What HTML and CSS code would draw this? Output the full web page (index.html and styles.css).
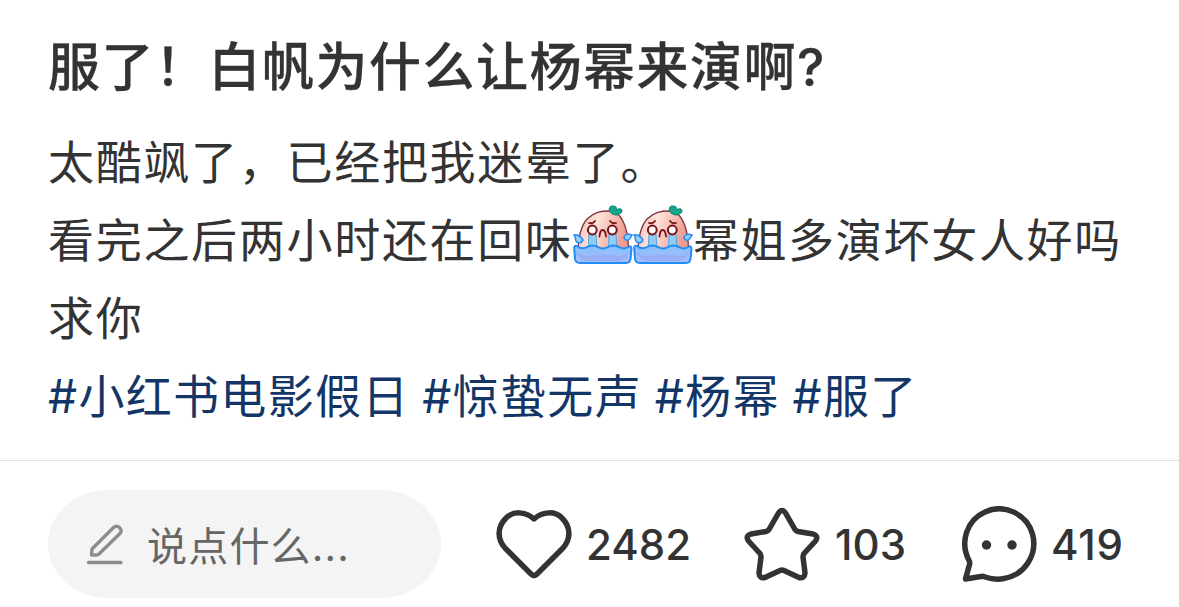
FILE: index.html
```html
<!DOCTYPE html>
<html lang="zh-CN">
<head>
  <meta charset="UTF-8">
  <meta name="viewport" content="width=device-width, initial-scale=1.0">
  <title>服了！白帆为什么让杨幂来演啊?</title>
  <link rel="stylesheet" href="styles.css">
</head>
<body>
  <!-- crying sticker, used twice in the text -->
  <svg class="defs" width="0" height="0">
    <defs>
      <linearGradient id="skin" x1="0" y1="0" x2="1" y2="0.3">
        <stop offset="0" stop-color="#f3b9aa"/>
        <stop offset="0.4" stop-color="#fde3da"/>
        <stop offset="1" stop-color="#ee9c90"/>
      </linearGradient>
      <linearGradient id="water" x1="0" y1="0" x2="0" y2="1">
        <stop offset="0" stop-color="#86c0ff"/>
        <stop offset="1" stop-color="#a9bdfb"/>
      </linearGradient>
    </defs>
    <symbol id="cry" viewBox="0 0 60 60">
      <path d="M5 50C5 36 7 23 14 15C21 8 28 7 36 7C45 7 49 14 52 22C55 31 56 40 55 50Z" fill="url(#skin)" stroke="#84353c" stroke-width="1.3"/>
      <path d="M43 11C34 10 35 1 40 2C43 2 44 4 44 6C47 3 51 6 48 9C47 10 45 10 44 11Z" fill="#11a68b" stroke="#078574" stroke-width="1"/>
      <path d="M16 30H23L24 46H15ZM36 30H43L44 46H35.500Z" fill="#93cdf0" stroke="#4da4e8" stroke-width="1"/>
      <circle cx="19.300" cy="26" r="4.400" fill="#fff" stroke="#7b1015" stroke-width="2"/>
      <circle cx="39.300" cy="26" r="4.400" fill="#fff" stroke="#7b1015" stroke-width="2"/>
      <path d="M16 19Q20 20 22 17M37 17Q39 20 43 19M26.500 32.500Q27 26 29.700 26Q32.400 26 33 32.500" fill="none" stroke="#7b1015" stroke-width="1.800" stroke-linecap="round"/>
      <path d="M1 31C4 30 9 33 10 36C9 39.500 4 39.500 3 37C2 35 3 33 1 31ZM59 31C55 29 51 31 51 34C53 38 57 36 59 31Z" fill="#9bcbfb" stroke="#218cf8" stroke-width="1.500"/>
      <path d="M1.200 44Q1 41 4 42Q9 46 14 43Q19 40 25 43Q30 46 35 43Q40 40 46 43Q51 46 55 43Q58.500 41 58.500 45L57.500 55Q57 59 53 59H7Q2.500 59 2 55Z" fill="url(#water)" stroke="#218cf8" stroke-width="2"/>
      <path d="M4 47Q6 57 14 57H45Q53 57 56 47Q52 52 46 52Q30 49 15 52Q8 52 4 47Z" fill="#8fa0ed" opacity=".5"/>
    </symbol>
  </svg>

  <main class="note">
    <h1>服了！白帆为什么让杨幂来演啊?</h1>
    <p>太酷飒了，已经把我迷晕了。</p>
    <p>看完之后两小时还在回味<svg class="emoji"><use href="#cry"/></svg><svg class="emoji"><use href="#cry"/></svg>幂姐多演坏女人好吗求你</p>
    <p class="tags"><a>#小红书电影假日</a> <a>#惊蛰无声</a> <a>#杨幂</a> <a>#服了</a></p>
  </main>

  <footer class="bar">
    <div class="comment-input">
      <svg class="pen" viewBox="0 0 38 42" fill="none" stroke="#8c8c8c" stroke-width="3.300" stroke-linecap="round" stroke-linejoin="round">
        <path d="M5.500 32L6 26L27.500 4.500Q30.500 2 33.500 4.500Q36.500 7.500 34 10.500L13 31Q12 32 10.500 32Z"/>
        <path d="M2.500 39.500H35"/>
      </svg>
      <span>说点什么...</span>
    </div>
    <div class="action like">
      <svg viewBox="0 0 76 76" fill="none" stroke="#333" stroke-width="5.500" stroke-linejoin="round">
        <path d="M38 13C29 5 17 5 10 12C1 21 1 33 9 42L35 68Q38 71 41 68L67 42C75 33 75 21 66 12C59 5 47 5 38 13Z"/>
      </svg>
      <span>2482</span>
    </div>
    <div class="action star">
      <svg viewBox="0 0 76 76" fill="none" stroke="#333" stroke-width="5.500" stroke-linejoin="round">
        <path d="M34.500 7Q38 2 41.500 7L51 23.500Q52 25 54 25.500L69 28Q75 30 71.500 35L60 47.500Q59 49 59 51L61 67Q60.500 73 55 71.500L40 64.500Q38 63.500 36 64.500L21 71.500Q15.500 73 15 67L17 51Q17 49 16 47.500L4.500 35Q1 30 7 28L22 25.500Q24 25 25 23.500Z"/>
      </svg>
      <span>103</span>
    </div>
    <div class="action chat">
      <svg viewBox="0 0 76 76" fill="none" stroke="#333" stroke-width="5.500" stroke-linejoin="round">
        <path d="M4.500 73L8.500 58.500Q9 57 8.500 55.500C-2 36 6 14 24 6C43-3 66 8 71.500 28C77 48 64 69 43 72.500C36 74 30 73 24 71Q22 70 20 70.500Z"/>
        <circle cx="25.500" cy="39" r="4.700" fill="#333" stroke="none"/>
        <circle cx="51" cy="39" r="4.700" fill="#333" stroke="none"/>
      </svg>
      <span>419</span>
    </div>
  </footer>
</body>
</html>
```

FILE: styles.css
```css
* {
  margin: 0; padding: 0; box-sizing: border-box;
}
body {
  background: #fff;
  color: #333;
  font-family: Inter, 'Noto Sans CJK SC', sans-serif;
}
.defs {
  position: absolute;
}
.note {
  height: 461px;
  padding: 29px 48px 0;
  border-bottom: 1px solid #e2e2e2;
}
.note h1 {
  font-size: 52px;
  font-weight: 500;
  line-height: 78px;
  letter-spacing: 1.5px;
  margin-bottom: 16px;
  -webkit-text-stroke: 0.3px #333;
}
.note p {
  font-size: 46px;
  line-height: 78px;
  letter-spacing: 1.7px;
}
.note .tags {
  color: #133667;
  letter-spacing: 1.3px;
  word-spacing: -1.5px;
}
.emoji {
  width: 60px;
  height: 60px;
  vertical-align: -7px;
}
.bar {
  display: flex;
  align-items: center;
  padding: 29px 48px 9px;
}
.comment-input {
  display: flex;
  align-items: center;
  width: 393px;
  height: 108px;
  padding-left: 38px;
  background: #f4f4f4;
  border-radius: 60px / 54px;
  color: #666;
  font-size: 40px;
  letter-spacing: 1.2px;
}
.pen {
  width: 38px;
  height: 42px;
  margin-right: 23px;
}
.action {
  display: flex;
  align-items: center;
  font-size: 42px;
  font-weight: 450;
}
.action svg {
  width: 76px;
  height: 76px;
  margin-right: 14px;
}
.like {
  margin-left: 55px;
}
.star {
  margin-left: 53px;
}
.star svg {
  margin-right: 15px;
}
.chat {
  margin-left: 55px;
  letter-spacing: 0.8px;
}
```
